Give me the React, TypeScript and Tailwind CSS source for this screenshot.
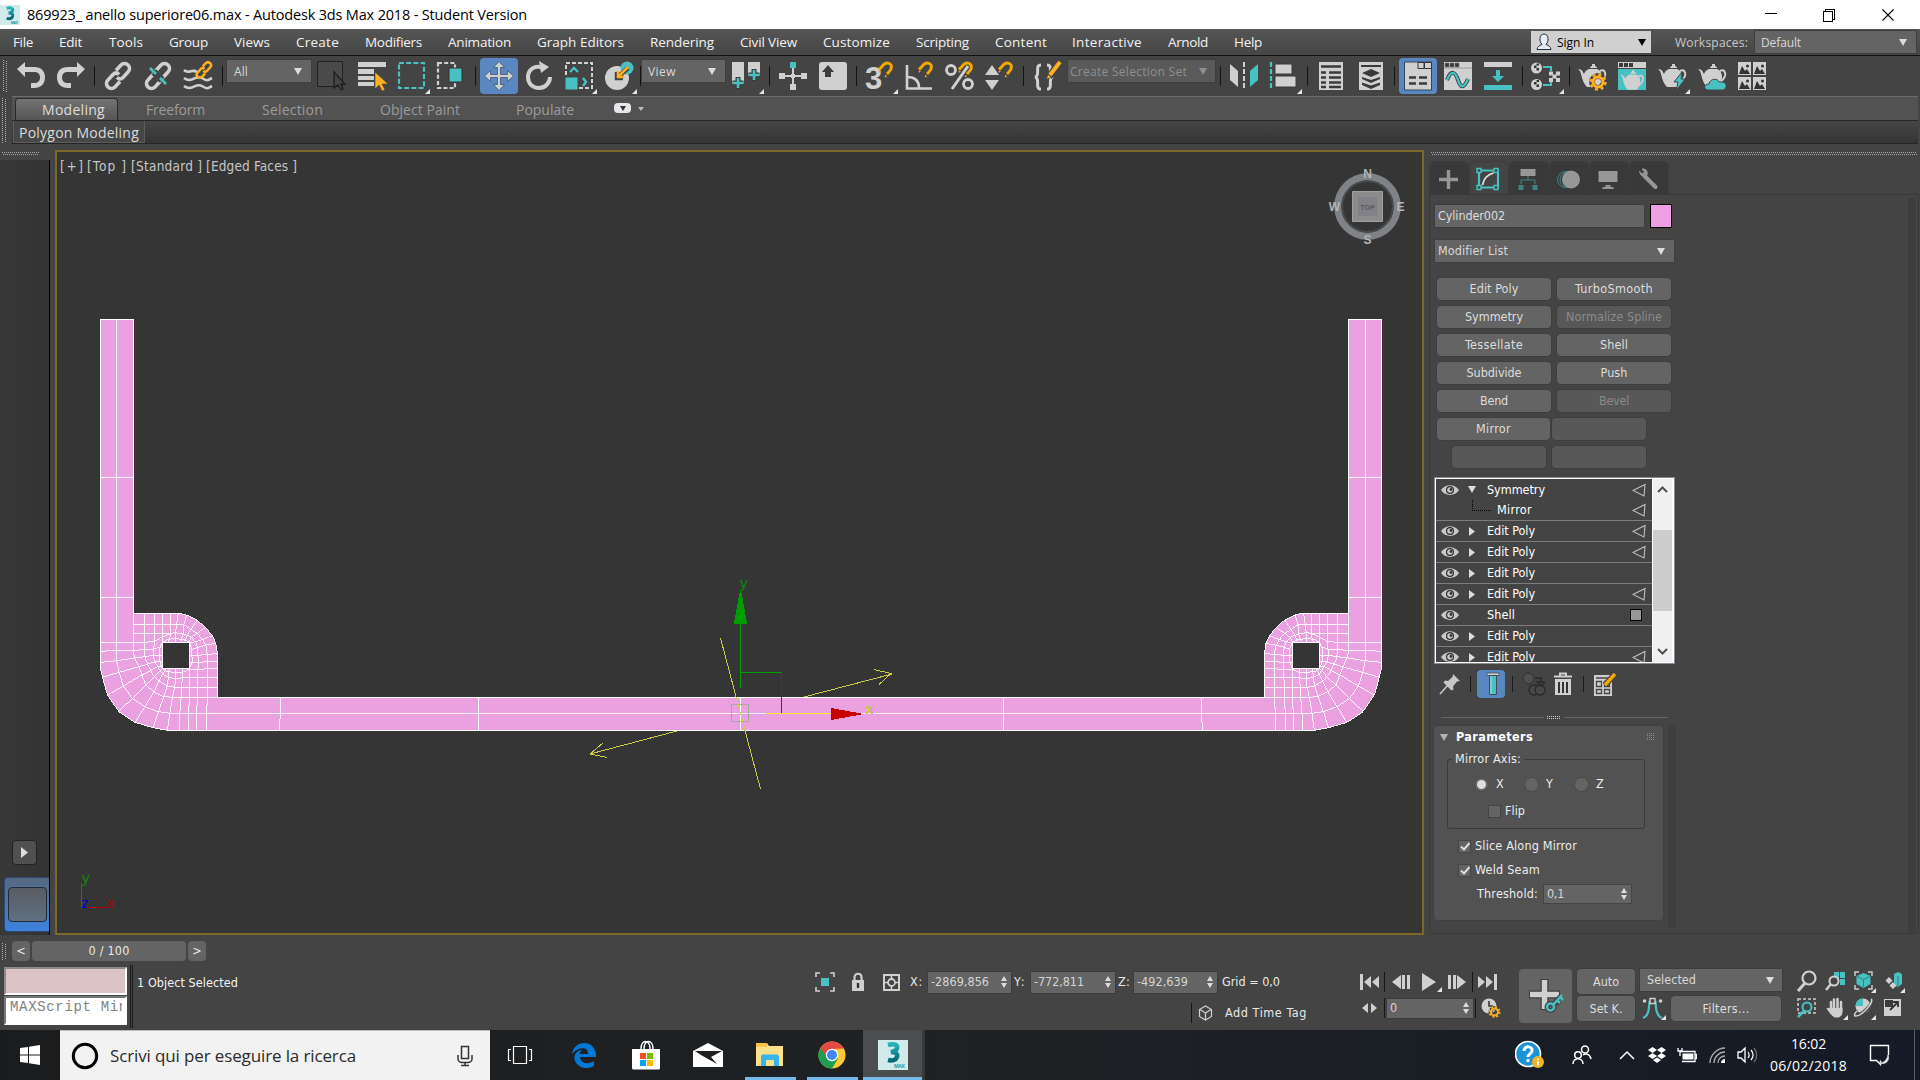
import React, { useLayoutEffect, useRef, useState } from 'react';

const L = '#d0d0d0';
const T = '#47c1c1';
const O = '#ffb01f';

/* Text tracked so that it fills the given advance width. */
function Txt({ w, className = '', children }: { w: number; className?: string; children: string }) {
  const ref = useRef<HTMLSpanElement>(null);
  const [sp, setSp] = useState(0);
  useLayoutEffect(() => {
    if (ref.current) setSp((w - ref.current.getBoundingClientRect().width) / children.length);
  }, [w, children]);
  return (
    <span ref={ref} className={`inline-block shrink-0 whitespace-pre ${className}`} style={{ letterSpacing: sp }}>
      {children}
    </span>
  );
}

type SvgP = { children: React.ReactNode; w?: number; h?: number; className?: string; vb?: string };
function Ico({ children, w = 32, h = 32, className = '', vb }: SvgP) {
  return (
    <svg width={w} height={h} viewBox={vb ?? `0 0 ${w} ${h}`} fill="none" className={`block shrink-0 ${className}`}>
      {children}
    </svg>
  );
}

function Tool({ children, active, fly }: { children: React.ReactNode; active?: boolean; fly?: boolean }) {
  return (
    <div className="flex h-10 w-10 shrink-0 items-center justify-center">
      <div className={active ? 'flex h-9 w-[38px] items-center justify-center rounded bg-[#5b87c1]' : 'flex h-9 w-[38px] items-center justify-center'}>
        <Ico w={38} h={36} vb="-3 -2 38 36" className="overflow-visible">
          {children}
          {fly && <path d="M34 29v5h-5z" fill="#e6e6e6" />}
        </Ico>
      </div>
    </div>
  );
}

const Sep = ({ className = 'w-[7px]' }: { className?: string }) => (
  <div className={`flex h-10 shrink-0 items-center justify-center ${className}`}>
    <div className="h-5 w-px bg-[#141414]" />
  </div>
);

const Down = ({ c = '#dcdcdc', w = 8 }: { c?: string; w?: number }) => (
  <Ico w={w} h={7} vb="0 0 8 7"><path d="M0 0h8L4 7z" fill={c} /></Ico>
);

function Combo({ label, tw, className, dim }: { label: string; tw: number; className: string; dim?: boolean }) {
  return (
    <div className={`flex shrink-0 items-center justify-between border border-[#3e3e3e] ${dim ? 'bg-[#5a5a5a] text-[#8f8f8f]' : 'bg-[#646464] text-[#d8d8d8]'} ${className}`}>
      <Txt w={tw} className="pt-px">{label}</Txt>
      <Down c={dim ? '#8f8f8f' : '#dcdcdc'} />
    </div>
  );
}

const Magnet = ({ x = 14, y = 2 }: { x?: number; y?: number }) => (
  <g transform={`translate(${x} ${y})`} stroke="#f5a800" fill="none">
    <path d="M1 7.500 4 4.500C7 0 11 0 13 3c1.500 3 0 5-3 8l-1 1" strokeWidth="3" />
    <path d="M1 9l2 2M7 14l3 1" strokeWidth="2" strokeDasharray="1.500 1.500" />
  </g>
);

const Teapot = ({ c = L, s = '' }: { c?: string; s?: string }) => (
  <g transform={s}>
    <path d="M2 9c4 0 5 3 6 5 1-3 3-4 5-5h8c3 1 5 4 5 8 0 4-2 7-4 10H11c-3-3-4-6-5-9C5 13 4 10 2 9zM14 8c0-1 1-2 2-2V4h3v2c1 0 2 1 2 2z" fill={c} />
    <path d="M24 11c4-2 6 1 5 5-1 3-3 5-6 7" stroke={c} strokeWidth="2" />
  </g>
);

const Chain = ({ cut }: { cut?: boolean }) => (
  <g stroke={L} strokeWidth="3.600">
    <path d="M14 10.500 19 5c2-2 5-2 7 0s2 5 0 7l-5 5.500c-2 2-4 2-6 0" />
    <path d="M18 21.500 13 27c-2 2-5 2-7 0s-2-5 0-7l5-5.500c2-2 4-2 6 0" />
    {cut && (
      <>
        <path d="M12 12l8 8" stroke="#444" strokeWidth="7" />
        <path d="M8 8l6 6M18 18l6 6" stroke={T} strokeWidth="2.800" />
      </>
    )}
  </g>
);

const menus: [string, number, string][] = [
  ['File', 20, 'w-[46px]'], ['Edit', 23, 'w-[50px]'], ['Tools', 34, 'w-[60px]'], ['Group', 39, 'w-[65px]'],
  ['Views', 36, 'w-[62px]'], ['Create', 43, 'w-[69px]'], ['Modifiers', 57, 'w-[83px]'], ['Animation', 63, 'w-[89px]'],
  ['Graph Editors', 87, 'w-[113px]'], ['Rendering', 64, 'w-[90px]'], ['Civil View', 57, 'w-[83px]'], ['Customize', 67, 'w-[93px]'],
  ['Scripting', 53, 'w-[79px]'], ['Content', 52, 'w-[77px]'], ['Interactive', 70, 'w-[96px]'], ['Arnold', 40, 'w-[66px]'], ['Help', 28, 'w-[40px]'],
];

const MaxLogo = ({ size }: { size: number }) => (
  <Ico w={size} h={size} vb="0 0 30 30">
    <defs>
      <linearGradient id="mx" x1="0" y1="0" x2="0" y2="1"><stop offset="0" stopColor="#22b5b5" /><stop offset="1" stopColor="#0a6670" /></linearGradient>
    </defs>
    <path d="M0 0h30v30H0z" fill="#d3eaec" />
    <path d="M10 5c6-2 10 0 9 3 0 3-4 3.500-6 4 5 0 7 2 6 5s-5 4-9 3" stroke="url(#mx)" strokeWidth="4.500" />
    <text x="16" y="28" fontSize="5.500" fontWeight="bold" fontFamily="Liberation Sans" fill="#12a0a8" textLength="11">MAX</text>
  </Ico>
);

function TitleBar() {
  return (
    <div className="flex h-[29px] items-center bg-white text-black">
      <MaxLogo size={20} />
      <div className="ml-[7px] flex-1 font-['Open_Sans'] text-[14.500px]"><Txt w={500}>869923_ anello superiore06.max - Autodesk 3ds Max 2018 - Student Version</Txt></div>
      <Ico w={130} h={16} className="mr-[26px]">
        <g stroke="#000" strokeWidth="1" shapeRendering="crispEdges">
          <path d="M1 6.500h12M59.500 4.500h9v10h-9zM61.500 4V2.500h9v10H69" />
        </g>
        <path d="M118.500 2.500l11 11M129.500 2.500l-11 11" stroke="#000" strokeWidth="1.100" />
      </Ico>
    </div>
  );
}

function MenuBar() {
  return (
    <div className="flex h-[27px] items-center border-b border-[#111] bg-gradient-to-b from-[#555] to-[#464646] pl-[13px] font-['Open_Sans'] text-[13.500px] text-[#f2f2f2]">
      {menus.map(([t, w, c]) => <div key={t} className={`shrink-0 ${c}`}><Txt w={w}>{t}</Txt></div>)}
      <div className="ml-auto flex h-[22px] w-[120px] items-center bg-[#d0d0d0] pl-1 text-[12px] text-black">
        <Ico w={18} h={18}>
          <path d="M2 16.500h14c0-3-3-4-5-5 2-2 2-4 2-6 0-6-8-6-8 0 0 2 0 4 2 6-2 1-5 2-5 5z" fill="#e9eef5" stroke="#1d2a3a" />
        </Ico>
        <span className="ml-1 pt-px"><Txt w={37}>Sign In</Txt></span>
        <span className="mr-1 ml-auto"><Down c="#000" w={10} /></span>
      </div>
      <div className="ml-6 w-[79px] pt-px text-[12px] text-[#c8c8c8]"><Txt w={73}>Workspaces:</Txt></div>
      <Combo label="Default" tw={40} className="mr-[3px] h-6 w-[163px] pr-[9px] pl-[6px] text-[12px]" />
    </div>
  );
}

const Grip = ({ className }: { className: string }) => (
  <Ico w={4} h={60} className={className}>
    <path d="M.500 0V60M3 1V60" stroke="#b0b0b0" strokeDasharray="1 1" shapeRendering="crispEdges" />
  </Ico>
);

function Toolbar() {
  return (
    <div className="flex h-10 items-center bg-[#444] pl-[2px] font-['Open_Sans'] text-[12px]">
      <div className="h-8 w-[9px] overflow-hidden"><Grip className="ml-px" /></div>
      <Tool><path d="M2 9 10 2v5h9c7 0 11 4 11 10 0 7-4 11-11 11h-3v-5h3c4 0 6-2 6-5.500S23 12 19 12h-9v5z" fill={L} /></Tool>
      <Tool><path d="M30 9 22 2v5h-9C6 7 2 11 2 17c0 7 4 11 11 11h3v-5h-3c-4 0-6-2-6-5.500S9 12 13 12h9v5z" fill={L} /></Tool>
      <Sep />
      <Tool><Chain /></Tool>
      <Tool><Chain cut /></Tool>
      <Tool>
        <path d="M2 10c5 5 8-2 13 2M2 18c8 6 12-4 18 0s6 2 10 0M2 26c8 6 12-4 18 0s6 2 10 0" stroke={L} strokeWidth="2.600" />
        <g transform="translate(12 0) scale(.62)"><path d="M14 10.500 19 5c2-2 5-2 7 0s2 5 0 7l-5 5.500c-2 2-4 2-6 0M18 21.500 13 27c-2 2-5 2-7 0s-2-5 0-7l5-5.500c2-2 4-2 6 0" stroke={O} strokeWidth="4" /></g>
      </Tool>
      <Sep className="w-2" />
      <Combo label="All" tw={14} className="mb-[10px] h-6 w-[86px] pr-[9px] pl-[7px]" />
      <Tool><path d="M1.500 1.500h25v25h-25z" fill="#4a4a4a" stroke="#222" /><path d="M18 12v16l4-3 3 5 2-1-2-5h4z" fill="#444" stroke="#1e1e1e" strokeWidth="1.300" /></Tool>
      <Tool>
        <path d="M2 2h28v5H2zM2 9h16v5H2zM2 16h16v4H2zM2 22h16v4H2z" fill={L} />
        <path d="M19 12v17l4-4 3 6 3-1-3-6h6z" fill={O} stroke="#444" strokeWidth=".600" />
      </Tool>
      <Tool fly><path d="M3 3h25v25H3z" stroke={T} strokeWidth="2.200" strokeDasharray="5 2.200" /></Tool>
      <Tool><path d="M2 3h17v25H2z" stroke={L} strokeWidth="2.200" strokeDasharray="4 2.200" /><path d="M13 8h13v14H13z" fill={T} stroke="#333" /></Tool>
      <Sep />
      <Tool active>
        <path d="M16 1.500l5.500 6h-4v7h7v-4l6 5.500-6 5.500v-4h-7v7h4l-5.500 6-5.500-6h4v-7h-7v4l-6-5.500 6-5.500v4h7v-7h-4z" fill={L} stroke="#3d5572" strokeWidth=".800" />
      </Tool>
      <Tool><path d="M20 8C12 4 5 10 5 17s5 11 11 11 11-5 11-11" stroke={L} strokeWidth="4" /><path d="M16 1l10 6-8 6z" fill={L} /></Tool>
      <Tool fly>
        <path d="M3 3h26v25H3z" stroke={L} strokeWidth="2" strokeDasharray="4 2" />
        <path d="M2 17h13v13H2z" fill={T} stroke="#444" />
        <path d="M7 12l4-4 4 4M20 18l3 4-3 4" stroke={T} strokeWidth="2.400" />
      </Tool>
      <Tool fly><circle cx="14" cy="18" r="12" fill={L} /><circle cx="24" cy="8" r="6.500" fill={T} /><path d="M25 8 14 18m0-6v6h6" stroke="#444" strokeWidth="4.500" /><path d="M25 7 15 17m0-6v6h6" stroke={O} strokeWidth="2.500" /></Tool>
      <Sep className="w-[2px]" />
      <Combo label="View" tw={28} className="mb-[10px] h-6 w-[85px] pr-[9px] pl-[6px]" />
      <Tool fly>
        <path d="M2 2h12v22H2zM18 2h12v14H18z" fill={L} />
        <path d="M8 17v12M2.500 23h11M24 9v12M18.500 15h11" stroke="#3a3a3a" strokeWidth="5" />
        <path d="M8 18v10M3 23h10M24 10v10M19 15h10" stroke={T} strokeWidth="2.600" />
      </Tool>
      <Sep />
      <Tool><path d="M16 6v22M4 16h24" stroke={L} strokeWidth="2" /><path d="M2 13h6v6H2zM24 13h6v6h-6zM13 24h6v6h-6zM14 14h4v4h-4z" fill={L} /><path d="M13 2h6v6h-6z" fill={T} /></Tool>
      <Tool><rect x="2" y="2" width="28" height="28" rx="3" fill={L} /><path d="M11 5l6 7h-3v5H8v-5H5z" fill="#3c3c3c" /></Tool>
      <Sep />
      <Tool fly><text x="1" y="29" fontSize="31" fontWeight="bold" fontFamily="Liberation Sans" fill={L}>3</text><Magnet /></Tool>
      <Tool><path d="M3 5v23.500h25M3 17c8 0 12 4 12 11" stroke={L} strokeWidth="2.600" /><Magnet /></Tool>
      <Tool><circle cx="7" cy="10" r="4.500" stroke={L} strokeWidth="2.800" /><circle cx="24" cy="24" r="4.500" stroke={L} strokeWidth="2.800" /><path d="M24 6 8 29" stroke={L} strokeWidth="3" /><Magnet /></Tool>
      <Tool><path d="M8 5l7 10H1zM8 30l7-10H1z" fill={L} /><Magnet /></Tool>
      <Sep />
      <Tool>
        <path d="M10 5c-7 0 0 11-6 12 6 1-1 12 6 12M16 5c7 0 0 11 6 12-6 1 1 12-6 12" stroke={L} strokeWidth="3" />
        <path d="M28 3 18 17" stroke="#444" strokeWidth="7" /><path d="M29 2 19 15" stroke={O} strokeWidth="4" /><path d="M16 19l1-4 3 2z" fill={O} />
      </Tool>
      <Combo label="Create Selection Set" tw={117} dim className="mb-[10px] h-6 w-[149px] pr-2 pl-[2px]" />
      <Sep className="w-2" />
      <Tool><path d="M2 4l8 7v16l-8-7z" fill={L} /><path d="M30 4l-8 7v16l8-7z" fill={T} /><path d="M16 2v28" stroke={L} strokeWidth="2" strokeDasharray="5 2" /></Tool>
      <Tool fly><path d="M3 2v28" stroke={T} strokeWidth="2.200" strokeDasharray="5 2" /><path d="M7 4h17v10H7zM7 16h21v11H7z" fill={L} stroke="#3a3a3a" /></Tool>
      <Sep />
      <Tool><path d="M4 2h24v28H4z" fill={L} /><path d="M6 6.500h20M6 12.500h5m3 0h12M6 17.500h5m3 0h12M6 22.500h5m3 0h12M6 27h5m3 0h12" stroke="#3a3a3a" strokeWidth="2.400" /></Tool>
      <Tool><path d="M4 2h24v28H4z" fill={L} /><path d="M6 6h20" stroke="#3a3a3a" strokeWidth="2" /><path d="M16 9l9 4-9 4-9-4zM7 17l9 3 9-3v2l-9 4-9-4zM7 22.500l9 3 9-3V25l-9 4-9-4z" fill="#3a3a3a" /></Tool>
      <Sep />
      <Tool active><path d="M2.500 2h27v28h-27z" fill={L} stroke="#33455c" /><path d="M16 2.500h6v6h-6zM22.500 2.500h7v6h-7z" fill={L} stroke="#333" /><path d="M7 17.500h7m3 0h8M7 23.500h7m3 0h8" stroke="#3a3a3a" strokeWidth="2.600" /></Tool>
      <Tool><path d="M2 2h28v28H2z" fill={L} /><path d="M3 3h4v4H3zM8 3h4v4H8zM13 3h4v4h-4zM2 8h28" fill="#3a3a3a" stroke="#777" strokeWidth=".600" /><path d="M5 20c4-10 8-9 11 0s6 8 10-1" stroke="#333" strokeWidth="4" /><path d="M5 20c4-10 8-9 11 0s6 8 10-1" stroke={T} strokeWidth="2.400" /></Tool>
      <Tool><path d="M2 2h28v5H2z" fill={L} /><path d="M2 25h28v5H2z" fill={T} /><path d="M14 10h4v6h4l-6 6-6-6h4z" fill={T} /></Tool>
      <Sep className="w-2" />
      <Tool fly>
        <circle cx="6.500" cy="8" r="5.500" fill={L} /><circle cx="6.500" cy="24.500" r="5.500" fill={L} />
        <path d="M4 5.500h2.500V8H4zM6.500 8H9v2.500H6.500zM6.500 3.500H9v2H6.500zM4 22h2.500v2.500H4zM6.500 24.500H9V27H6.500zM6.500 20H9v2H6.500z" fill="#333" />
        <path d="M13 7h8v4M13 25h8v-4" stroke={T} strokeWidth="2" />
        <path d="M19 11.500h4v4h-4zM26 11.500h4v4h-4zM22.500 14.500h4v4h-4zM19 18h4v4h-4zM26 18h4v4h-4z" fill={L} />
      </Tool>
      <Sep className="w-[6px]" />
      <Tool><Teapot /><circle cx="22" cy="22" r="6" stroke="#444" strokeWidth="6" /><circle cx="22" cy="22" r="5" stroke={O} strokeWidth="3" /><circle cx="22" cy="22" r="7.500" stroke={O} strokeWidth="2.400" strokeDasharray="3 2.900" /></Tool>
      <Tool><path d="M2 2h28v6H2z" fill={L} /><path d="M3 3h4v4H3zM8 3h4v4H8zM13 3h4v4h-4z" fill="#3a3a3a" /><path d="M2 9h28v21H2z" fill={T} /><Teapot s="translate(2.500 7) scale(.84)" /></Tool>
      <Tool fly><Teapot /><path d="M26 12l-8 10h4l-2 9 9-12h-4z" fill={T} stroke="#444" /></Tool>
      <Tool><Teapot /><path d="M12 30c-5-1-4-6 1-6 1-6 9-6 10-2 5-1 8 2 7 5s-3 3-5 3z" fill={T} stroke="#444" /></Tool>
      <Tool>
        {[[2, 2], [17, 2], [2, 17], [17, 17]].map(([x, y]) => (
          <g key={`${x}-${y}`} transform={`translate(${x} ${y})`}><path d="M0 0h13v13H0z" fill={L} /><path d="M1 12l3-8 3 5 2-2 3 5z" fill="#333" /><circle cx="9.500" cy="4" r="1.500" fill="#333" /></g>
        ))}
      </Tool>
    </div>
  );
}

function Ribbon() {
  return (
    <div className="flex bg-[#444] pr-[2px] pl-[2px] font-['Open_Sans'] text-[14px]">
      <div className="mt-[2px] h-[45px] w-[10px] overflow-hidden"><Grip className="" /></div>
      <div className="flex-1">
        <div className="flex h-[25px] items-end border-t border-b border-t-[#6b6b6b] border-b-[#262626] bg-[#525252] pl-[3px] text-[#9b9b9b]">
          <div className="flex h-[22px] w-[103px] items-center rounded-t-sm border border-b-0 border-[#2a2a2a] bg-gradient-to-b from-[#747474] to-[#555] pl-[26px] text-[#dcdcdc]"><Txt w={63}>Modeling</Txt></div>
          <div className="flex h-[22px] items-center">
            <div className="ml-[28px] w-[116px]"><Txt w={59}>Freeform</Txt></div>
            <div className="w-[118px]"><Txt w={61}>Selection</Txt></div>
            <div className="w-[136px]"><Txt w={80}>Object Paint</Txt></div>
            <div className="w-[98px]"><Txt w={58}>Populate</Txt></div>
            <div className="mb-[2px] flex h-[10px] w-[17px] items-center justify-center rounded-sm bg-[#e6e6ea]"><Ico w={6} h={5}><path d="M0 0h6L3 5z" fill="#333" /></Ico></div>
            <Ico w={6} h={4} className="ml-[7px]"><path d="M0 0h6L3 4z" fill="#bbb" /></Ico>
          </div>
        </div>
        <div className="flex h-[23px] border-b border-[#262626] bg-gradient-to-b from-[#464646] to-[#343434]">
          <div className="ml-px flex w-[132px] items-center border border-t-0 border-[#5c5c5c] bg-[#474747] pt-[2px] pl-[5px] text-[#dcdcdc]"><Txt w={120}>Polygon Modeling</Txt></div>
        </div>
      </div>
    </div>
  );
}

function LeftStrip() {
  return (
    <div className="flex w-[55px] shrink-0 flex-col">
      <Ico w={38} h={10} className="ml-[2px]"><path d="M0 2.500H37M1 4.500H37" stroke="#a8a8a8" strokeDasharray="1 1" shapeRendering="crispEdges" /></Ico>
      <div className="flex w-[50px] flex-1 flex-col justify-end border-r border-black bg-gradient-to-r from-[#383838] to-[#333]">
        <div className="ml-3 flex h-[25px] w-[25px] items-center justify-center rounded border border-[#222] bg-[#505050]"><Ico w={7} h={11}><path d="M0 0l7 5.500L0 11z" fill="#dedede" /></Ico></div>
        <div className="mt-3 mb-[3px] ml-[4px] h-[55px] rounded-l border border-r-0 border-[#2d4a73] bg-gradient-to-b from-[#566880] to-[#3b82e0] px-[3px] pt-[9px]">
          <div className="h-[35px] w-[39px] rounded-sm border border-[#222c38] bg-gradient-to-b from-[#585c62] to-[#606f82]" />
        </div>
      </div>
    </div>
  );
}

/* Corner mesh, drawn at three units per pixel. */
const mesh = [
  'M110-783V240L118 278 131 318 157 355 195 380 235 395 270 400H1983',
  'M62-307H160M62 52H160',
  'M160 100V212L165 235 178 262 198 315 222 335 252 350 280 352H412',
  'M160 133H310L332 148 352 160 368 178 380 200 382 222 383 352 380 400 379 451',
  'M193 100V205L196 235 205 255 218 282 238 303 262 318 285 322H412',
  'M160 160H270L287 158 315 163 335 172 350 192 354 206 355 245 353 352 350 400 349 451',
  'M223 100V190L221 227 224 243 235 262 250 284 266 292 287 296 312 293 412 292',
  'M240 205 247 188 262 178 287 176 314 179 328 187 336 205 337 248 328 267 312 276 287 277 262 275 247 265 240 245 238 222z',
  'M247 100V187M271 100V170L266 187M295 102 291 130 287 160V187',
  'M62 187H195L225 184 245 172 262 165 280 160',
  'M62 214 110 211 160 212 193 208 222 207 242 201',
  'M64 247 112 242 163 234 196 230 221 226H248',
  'M70 291 118 277 178 260 205 252 235 243 248 245',
  'M85 344 131 318 182 287 210 273 232 260 248 258',
  'M118 393 157 356 198 316 222 293 248 265',
  'M167 425 195 380 222 336 238 303 250 280 260 265',
  'M220 443 235 397 252 350 262 318 266 292 268 266',
  'M263 451 270 400 278 352 285 320 287 296V265',
  'M298 451 300 400 304 352 305 322 308 293V266',
  'M325 451 326 400 329 352 328 265',
  'M328 270 355 268 412 265M328 248 412 244M328 227 382 224 412 220',
  'M336 208 354 202 380 195 410 190M328 190 350 184 370 178 398 167',
  'M328 187 335 172 352 160 378 142M314 182 325 160 335 145 352 120M304 182 310 160 312 135 320 106',
  'M602 352V400L598 451M1197 352V451',
];
const outline = 'M1983 352H412V215L408 190 398 168 380 145 352 120 320 105 300 100H160V-783H62V265L68 292 83 345 118 396 165 427 220 443 263 451H1983';

const Half = () => (
  <g>
    <path d={`${outline}z M248 187V265H328V187z`} fill="#eba1df" fillRule="evenodd" />
    <path d={`${outline} M248 187V265H328V187z`} stroke="#fff" strokeWidth="3" />
    {mesh.map((d) => <path key={d} d={d} stroke="#fff" strokeWidth="2.700" />)}
  </g>
);

function Viewport() {
  return (
    <div className="h-[785px] w-[1369px] shrink-0 border-2 border-[#7c6828] bg-[#353535]">
      <svg width="1365" height="781" viewBox="57 152 1365 781" fill="none" className="block">
        <g shapeRendering="crispEdges">
          <g transform="translate(79.800 580) scale(.33333)"><Half /></g>
          <g transform="translate(1402 580) scale(-.33333 .33333)"><Half /></g>
          <path d="M740.500 697v33" stroke="#fff" />
        </g>
        <g transform="translate(560 560)" shapeRendering="crispEdges">
          <path d="M180.500 30l6 33h-12zM180.500 64v64M180.500 112.500h41" fill="#009c00" stroke="#009c00" />
          <path d="M221.500 113v40" stroke="#c80000" />
          <path d="M206 153.500h66" stroke="#f6e926" />
          <path d="M271 148l33 6-33 6z" fill="#c80000" />
          <path d="M171.500 144.500h17v17h-17z" stroke="#a8a8a8" />
          <path d="M160.500 78 200.500 229M244 137 332 114M314 109.500l17 4-12 11M117 171 30 194M47 197.500l-17-3.500 13-11" stroke="#cfca4a" />
        </g>
        <g fontFamily="Liberation Sans" fontSize="15">
          <text x="740" y="588" fill="#0a8a0a">y</text>
          <text x="865.500" y="714" fill="#777">x</text>
          <text x="865" y="713.500" fill="#e8dc20">x</text>
          <text x="82" y="883" fill="#0a8a0a">y</text>
          <text x="107" y="908" fill="#b00000">x</text>
          <text x="81.500" y="907.500" fill="#0000d0">z</text>
        </g>
        <g shapeRendering="crispEdges"><path d="M81.500 883v25" stroke="#0a8a0a" /><path d="M87 907.500h20" stroke="#b00000" /></g>
        <circle cx="1367.500" cy="206.500" r="29.800" stroke="#7f8287" strokeWidth="7" />
        <circle cx="1367.500" cy="206.500" r="25.200" stroke="#4a4d51" strokeWidth="1.500" />
        <path d="M1352.500 191.500h30v30h-30z" fill="#8c8c8c" stroke="#a0a0a0" />
        <path d="M1358 197h19v19h-19z" fill="#808287" />
        <g fontFamily="Liberation Sans" fontWeight="bold" textAnchor="middle">
          <text x="1367.500" y="209.500" fontSize="7" fill="#5a5c60">TOP</text>
          <g fontSize="12" fill="#b4b4b4">
            <text x="1367.500" y="178">N</text><text x="1367.500" y="244">S</text><text x="1334.500" y="211">W</text><text x="1400.500" y="211">E</text>
          </g>
        </g>
        <g fontFamily="DejaVu Sans Condensed, DejaVu Sans" fontSize="13.500" fill="#c6c6c6">
          <text x="60" y="171" textLength="23">[+]</text>
          <text x="87" y="171" textLength="39">[Top ]</text>
          <text x="131" y="171" textLength="71">[Standard ]</text>
          <text x="206" y="171" textLength="91">[Edged Faces ]</text>
        </g>
      </svg>
    </div>
  );
}

const G = '#979797';
const TD = '#3f8484';
const tabs = [
  <path key="a" d="M20 9v19M10.500 18.500h19" stroke={G} strokeWidth="3.400" />,
  <g key="b"><path d="M10.500 9.500h19v17h-19z" stroke={T} strokeWidth="2.200" /><path d="M8.500 7.500h4v4h-4zM25.500 7.500h4v4h-4zM8.500 24.500h4v4h-4zM25.500 24.500h4v4h-4z" fill="#444" stroke={T} strokeWidth="1.400" /><path d="M14 24c1-6 4-10 11-12" stroke="#e0e0e0" strokeWidth="1.800" /></g>,
  <g key="c"><path d="M12 8h15v7H12z" fill={G} /><path d="M19.500 15v4M12.500 23v-4h14v4" stroke={TD} /><path d="M10 24h5v5h-5zM24 24h5v5h-5z" fill={TD} /></g>,
  <g key="d"><circle cx="17" cy="18.500" r="8" stroke={TD} /><circle cx="19.500" cy="18.500" r="8" stroke={TD} /><circle cx="22.500" cy="18.500" r="9" fill={G} /></g>,
  <path key="e" d="M10 10h19v11H10zM17 24h5v2h3v2H14v-2h3z" fill={G} />,
  <g key="f"><path d="M16 15l11 11" stroke={G} strokeWidth="4" strokeLinecap="round" /><path d="M11 10.500l3 2.500 2-2-2.500-3c4-.500 6 2 5 6-1 2-6 3-7.500-3.500z" fill={G} stroke={G} /></g>,
];

function Btn({ t, w, dim, className = '' }: { t?: string; w?: number; dim?: boolean; className?: string }) {
  return (
    <div className={`flex h-6 shrink-0 items-center justify-center rounded-[5px] border border-[#3e3e3e] pt-px ${dim ? 'bg-[#585858] text-[#8b8b8b]' : 'bg-[#646464] text-[#dcdcdc]'} ${className}`}>
      {t && <Txt w={w ?? 40}>{t}</Txt>}
    </div>
  );
}

const Eye = () => (
  <Ico w={18} h={12} className="ml-[5px]"><path d="M0 6c4-6.500 14-6.500 18 0-4 6.500-14 6.500-18 0z" fill="#c8c8c8" /><circle cx="9" cy="6" r="4" fill="#2e2e2e" /><circle cx="9" cy="6" r="2.800" fill="#c8c8c8" /><circle cx="10" cy="5.500" r="1.400" fill="#333" /></Ico>
);
const Flag = () => <Ico w={14} h={14}><path d="M1 7.500 13 1.500 12 13z" stroke="#c0c0c0" strokeWidth="1.100" /></Ico>;

type Row = { t: string; w: number; arrow?: boolean; flag?: 'tri' | 'box' };
const rows: Row[] = [
  { t: 'Edit Poly', w: 48, arrow: true, flag: 'tri' },
  { t: 'Edit Poly', w: 48, arrow: true, flag: 'tri' },
  { t: 'Edit Poly', w: 48, arrow: true },
  { t: 'Edit Poly', w: 48, arrow: true, flag: 'tri' },
  { t: 'Shell', w: 28, flag: 'box' },
  { t: 'Edit Poly', w: 48, arrow: true },
  { t: 'Edit Poly', w: 48, arrow: true, flag: 'tri' },
];

function Stack() {
  return (
    <div className="ml-[4px] flex h-[187px] w-[241px] border border-[#8a8a94] bg-white p-px text-white">
      <div className="w-[216px] overflow-hidden bg-[#444]">
        <div className="flex h-[21px] items-center">
          <Eye />
          <div className="mx-[9px] w-[8px]"><Down /></div>
          <div className="ml-[2px] w-[145px] pt-px"><Txt w={58}>Symmetry</Txt></div>
          <Flag />
        </div>
        <div className="flex h-[21px] items-center border-b border-[#7d7d7d]">
          <Ico w={20} h={20} className="ml-[36px]"><path d="M.500 0v10.500H20" stroke="#000" strokeDasharray="1 1" shapeRendering="crispEdges" /></Ico>
          <div className="ml-[5px] w-[135px] pt-px"><Txt w={35}>Mirror</Txt></div>
          <Flag />
        </div>
        {rows.map((r, i) => (
          <div key={i} className="flex h-[21px] items-center border-b border-[#7d7d7d]">
            <Eye />
            <div className="mx-[10px] w-[8px]">{r.arrow && <Ico w={6} h={9}><path d="M0 0l6 4.500L0 9z" fill="#dcdcdc" /></Ico>}</div>
            <div className="w-[145px] pt-px"><Txt w={r.w}>{r.t}</Txt></div>
            {r.flag === 'tri' && <Flag />}
            {r.flag === 'box' && <div className="-ml-[2px] h-3 w-3 border border-black bg-[#979797]" />}
          </div>
        ))}
      </div>
      <div className="ml-px flex w-[19px] flex-col items-center bg-[#f0f0f0]">
        <Ico w={11} h={7} className="mt-[7px]"><path d="M1 6l4.500-4.500L10 6" stroke="#505050" strokeWidth="2" /></Ico>
        <div className="mt-[37px] h-[81px] w-[19px] bg-[#cdcdcd]" />
        <Ico w={11} h={7} className="mt-[37px]"><path d="M1 1l4.500 4.500L10 1" stroke="#505050" strokeWidth="2" /></Ico>
      </div>
    </div>
  );
}

const Tick = ({ on }: { on?: boolean }) => (
  <div className="flex h-[13px] w-[13px] shrink-0 items-center justify-center border border-[#454545] bg-[#646464]">
    {on && <Ico w={10} h={9}><path d="M1 4.500l3 3L9.500 1" stroke="#dedede" strokeWidth="2" /></Ico>}
  </div>
);
const Spin = () => <Ico w={6} h={12}><path d="M3 0l3 5H0zM3 12l3-5H0z" fill="#dcdcdc" /></Ico>;

function CommandPanel() {
  return (
    <div className="flex w-[496px] shrink-0 flex-col pt-[2px] pl-[5px] font-['DejaVu_Sans_Condensed','DejaVu_Sans'] text-[12.500px] text-[#dcdcdc]">
      <Ico w={486} h={4} className="ml-[2px]"><path d="M0 .500H486M1 2.500H486" stroke="#a8a8a8" strokeDasharray="1 1" shapeRendering="crispEdges" /></Ico>
      <div className="mt-[5px] flex h-[33px]">
        {tabs.map((t, i) => (
          <div key={i} className={`w-10 overflow-hidden rounded-t-md border-x border-t border-[#3b3b3b] ${i === 1 ? 'bg-[#444]' : 'bg-[#393939]'}`}><Ico w={38} h={33} vb="1.500 1 38 33">{t}</Ico></div>
        ))}
      </div>
      <div className="flex h-[740px] w-[490px] rounded-b border border-[#393939]">
        <div className="w-[246px]">
          <div className="mt-[9px] ml-[4px] flex items-center">
            <div className="flex h-6 w-[211px] items-center border border-[#3e3e3e] bg-[#646464] pl-[3px]"><Txt w={67}>Cylinder002</Txt></div>
            <div className="ml-[5px] h-6 w-[22px] border border-black bg-[#f09fe4]" />
          </div>
          <Combo label="Modifier List" tw={70} className="mt-[11px] ml-[4px] h-6 w-[241px] pr-[9px] pl-[3px]" />
          <div className="mt-[14px] ml-[6px] grid w-[236px] grid-cols-[116px_116px] gap-x-1 gap-y-1">
            <Btn t="Edit Poly" w={49} /><Btn t="TurboSmooth" w={78} />
            <Btn t="Symmetry" w={58} /><Btn t="Normalize Spline" w={96} dim />
            <Btn t="Tessellate" w={58} /><Btn t="Shell" w={28} />
            <Btn t="Subdivide" w={55} /><Btn t="Push" w={27} />
            <Btn t="Bend" w={28} /><Btn t="Bevel" w={30} dim />
          </div>
          <div className="mt-1 ml-[6px] flex"><Btn t="Mirror" w={35} className="w-[115px]" /><Btn dim className="w-24" /></div>
          <div className="mt-1 mb-2 ml-[21px] flex gap-1"><Btn dim className="w-24" /><Btn dim className="w-24" /></div>
          <Stack />
          <div className="mt-[6px] ml-[9px] flex h-7 items-center">
            <Ico w={22} h={22}><path d="M1 21l8-9" stroke="#c8c8c8" strokeWidth="1.600" /><path d="M14 1l7 7-3 .500-4 5 .500 3-2 1-8-8 1.500-2 3 .500 4.500-4z" fill="#c8c8c8" /></Ico>
            <div className="ml-[9px] h-4 w-px bg-[#1a1a1a]" />
            <div className="ml-[6px] flex h-7 w-7 items-center justify-center rounded bg-[#5b87c1]"><Ico w={14} h={24} className="ml-[3px]"><path d="M1 1h12v2.500H1z" fill={L} stroke="#333" strokeWidth=".600" /><path d="M3.500 3.500v19h7v-19z" fill={T} stroke="#3d4a58" /><path d="M5 4v18" stroke={L} /></Ico></div>
            <div className="ml-[7px] h-4 w-px bg-[#1a1a1a]" />
            <Ico w={24} h={24} className="ml-[9px]"><circle cx="6.500" cy="6.500" r="5.500" fill="#4f4f4f" stroke="#2d2d2d" /><circle cx="12" cy="18" r="5" fill="#484848" stroke="#2a2a2a" strokeWidth="1.300" /><circle cx="18" cy="18" r="5" fill="#484848" stroke="#2a2a2a" strokeWidth="1.300" /><path d="M13 6h6v5m-4-1 4 4 4-4z" stroke="#2a2a2a" strokeWidth="1.500" /></Ico>
            <Ico w={18} h={24} className="ml-[8px]"><path d="M6 4V1.500h6V4M0 4.500h18" stroke={L} strokeWidth="2" /><path d="M1 7h16v16H1z" fill={L} /><path d="M5 10v11M9 10v11M13 10v11" stroke="#333" strokeWidth="2" /></Ico>
            <div className="ml-[11px] h-4 w-px bg-[#1a1a1a]" />
            <Ico w={24} h={25} className="ml-[9px]"><path d="M1 3h18v21H1z" fill={L} /><path d="M3 6h13M3.500 9.500h5v5h-5zM11.500 9.500h5v5h-5zM3.500 17.500h5v4h-5zM11.500 17.500h5v4h-5z" stroke="#444" strokeWidth="1.300" /><path d="M22 2 12 13" stroke="#444" strokeWidth="6" /><path d="M22 2 12 13" stroke="#f5a800" strokeWidth="3.400" /></Ico>
          </div>
          <Ico w={227} h={6} className="mt-4 ml-[11px]"><path d="M0 3.500h103M123 3.500h104" stroke="#666" /><path d="M106 2.500h13M106 4.500h13" stroke="#ccc" strokeDasharray="1 1" shapeRendering="crispEdges" /></Ico>
          <div className="mt-[5px] flex">
            <div className="ml-[3px] h-[196px] w-[231px] rounded border border-[#3f3f3f] bg-[#525252] text-[#ececec]">
              <div className="mt-[3px] flex h-4 items-center pl-[6px]">
                <Down c="#b4b4b4" />
                <span className="ml-2 pt-px font-bold text-white"><Txt w={77}>Parameters</Txt></span>
                <Ico w={8} h={8} className="mr-[8px] ml-auto"><path d="M0 .500h8M0 2.500h8M0 4.500h8M0 6.500h8" stroke="#8e8e8e" strokeDasharray="1 1" shapeRendering="crispEdges" /></Ico>
              </div>
              <fieldset className="mt-[6px] ml-[13px] h-[78px] w-[198px] rounded-[3px] border border-[#3a3a3a]">
                <legend className="ml-[4px] h-4 px-[3px] leading-4"><Txt w={66}>Mirror Axis:</Txt></legend>
                <div className="mt-[8px] ml-[26px] flex h-[19px] items-center">
                  {['X', 'Y', 'Z'].map((a) => (
                    <div key={a} className="flex w-[50px] items-center">
                      <div className="flex h-[15px] w-[15px] items-center justify-center rounded-full border border-[#4a4a4a] bg-[#646464]">{a === 'X' && <div className="h-[9px] w-[9px] rounded-full bg-[#dedede]" />}</div>
                      <span className="ml-[7px]">{a}</span>
                    </div>
                  ))}
                </div>
                <div className="mt-[8px] ml-[40px] flex h-[18px] items-center gap-[4px]"><Tick /><Txt w={20}>Flip</Txt></div>
              </fieldset>
              <div className="mt-[8px] ml-[24px] flex h-[18px] items-center gap-[4px]"><Tick on /><Txt w={102} className="pt-px">Slice Along Mirror</Txt></div>
              <div className="mt-[6px] ml-[24px] flex h-[18px] items-center gap-[4px]"><Tick on /><Txt w={65} className="pt-px">Weld Seam</Txt></div>
              <div className="mt-[5px] ml-[43px] flex items-center">
                <Txt w={61}>Threshold:</Txt>
                <div className="ml-[5px] flex h-5 w-[89px] items-center justify-between border border-[#454545] bg-[#646464] pr-[4px] pl-[3px] text-[#d4d4d4]"><Txt w={17}>0,1</Txt><Spin /></div>
              </div>
            </div>
            <div className="ml-[4px] h-[203px] w-2 rounded-t bg-[#3e3e3e]" />
          </div>
        </div>
        <div className="mt-[3px] mr-[2px] ml-auto w-2 rounded-t bg-[#3d3d3d]" />
      </div>
    </div>
  );
}

const Field = ({ v, w, className }: { v: string; w: number; className: string }) => (
  <div className={`flex shrink-0 items-center justify-between border border-[#3c3c3c] bg-[#646464] pr-[4px] pl-[3px] text-[#d4d4d4] ${className}`}><Txt w={w} className="pt-px">{v}</Txt><Spin /></div>
);
const Bar = ({ className = '' }: { className?: string }) => <div className={`h-5 w-px shrink-0 bg-[#161616] ${className}`} />;
const NavFly = () => <path d="M25 20v5h-5z" fill="#e6e6e6" />;

function Status() {
  return (
    <div className="flex h-[95px] flex-col bg-[#444] font-['DejaVu_Sans_Condensed','DejaVu_Sans'] text-[12.500px] text-[#e8e8e8]">
      <div className="flex h-[30px] items-center pt-[2px]">
        <div className="ml-[2px] h-[17px] w-[10px] overflow-hidden"><Grip className="" /></div>
        <div className="flex h-5 w-[18px] items-center justify-center rounded bg-[#646464]">&lt;</div>
        <div className="mx-[2px] flex h-5 w-[154px] items-center justify-center rounded bg-[#646464] pt-px"><Txt w={41}>0 / 100</Txt></div>
        <div className="flex h-5 w-[18px] items-center justify-center rounded bg-[#646464]">&gt;</div>
      </div>
      <div className="flex h-[65px]">
        <div className="mt-[2px] ml-[4px] w-[123px]">
          <div className="h-[28px] border-2 border-t-[#8b8b8b] border-r-white border-b-white border-l-[#8b8b8b] bg-[#dbc3c3]" />
          <div className="mt-px flex h-[29px] overflow-hidden border-2 border-t-[#777] border-r-white border-b-white border-l-[#777] bg-white pr-[3px] pl-[4px]">
            <div className="overflow-hidden font-['Liberation_Mono'] text-[14px] leading-[19px] whitespace-nowrap text-[#808080]"><Txt w={136}>MAXScript Mini </Txt></div>
          </div>
        </div>
        <div className="mt-0 ml-[3px] h-[63px] w-[3px] border-x border-[#1a1a1a]" />
        <div className="mt-[9px] ml-[4px] w-[678px]"><Txt w={101} className="text-[#f4f4f4]">1 Object Selected</Txt></div>
        <div className="w-[545px]">
          <div className="flex h-[34px] items-center">
            <Ico w={20} h={20}><path d="M1 5V1h4M15 1h4v4M19 15v4h-4M5 19H1v-4" stroke={L} strokeWidth="1.600" /><path d="M6 6h8v8H6z" fill={T} /></Ico>
            <Ico w={12} h={20} className="ml-[17px]"><path d="M2.500 9V5.500c0-5 7-5 7 0V9" stroke={L} strokeWidth="2.200" /><path d="M0 8h12v11H0z" fill={L} /><path d="M6 11v5" stroke="#333" strokeWidth="2.400" /></Ico>
            <Ico w={17} h={17} className="ml-[19px]"><path d="M1 1h15v15H1z" stroke={L} strokeWidth="2" /><circle cx="8.500" cy="8.500" r="3.500" stroke={L} strokeWidth="1.800" /><path d="M8.500 2v3M8.500 12v3M2 8.500h3M12 8.500h3" stroke={L} strokeWidth="1.600" /></Ico>
            <div className="ml-[10px] w-[17px] pt-px"><Txt w={13}>X:</Txt></div><Field v="-2869,856" w={58} className="h-[23px] w-[85px]" />
            <div className="ml-[2px] w-[16px] pt-px"><Txt w={12}>Y:</Txt></div><Field v="-772,811" w={50} className="h-[23px] w-[86px]" />
            <div className="ml-[2px] w-[15px] pt-px"><Txt w={12}>Z:</Txt></div><Field v="-492,639" w={51} className="h-[23px] w-[85px]" />
            <div className="ml-[4px]"><Txt w={58}>Grid = 0,0</Txt></div>
          </div>
          <div className="ml-[376px] flex h-[28px] items-center">
            <Bar />
            <Ico w={15} h={16} className="ml-[6px]"><path d="M7.500 1l6 3.500v7l-6 3.500-6-3.500v-7zM7.500 15V8L2 4.500M7.500 8 13 4.500" stroke={L} strokeWidth="1.200" /></Ico>
            <div className="ml-[12px] pt-px"><Txt w={82}>Add Time Tag</Txt></div>
          </div>
        </div>
        <div className="w-[159px]">
          <div className="flex h-[34px] items-center">
            <Ico w={19} h={16}><path d="M1.500 0v16" stroke={L} strokeWidth="3" /><path d="M11 2v12L4 8zM19 2v12l-7-6z" fill={L} /></Ico>
            <Bar className="ml-[5px]" />
            <Ico w={18} h={16} className="ml-[7px]"><path d="M9 1v14L0 8zM10 1h3v14h-3zM15 1h3v14h-3z" fill={L} /></Ico>
            <Ico w={21} h={20} className="ml-[12px]"><path d="M0 1l14 9-14 9z" fill={L} /><path d="M20 15v5h-5z" fill="#e6e6e6" /></Ico>
            <Ico w={18} h={16} className="ml-[5px]"><path d="M9 1v14l9-7zM0 1h3v14H0zM5 1h3v14H5z" fill={L} /></Ico>
            <Bar className="ml-[6px]" />
            <Ico w={19} h={16} className="ml-[5px]"><path d="M17.500 0v16" stroke={L} strokeWidth="3" /><path d="M0 2v12l7-6zM8 2v12l7-6z" fill={L} /></Ico>
          </div>
          <div className="flex h-[18px] items-center">
            <Ico w={15} h={12} className="ml-[2px]"><path d="M6 1v10L0 6zM9 1v10l6-5z" fill={L} /></Ico>
            <Bar className="ml-[7px]" />
            <Field v="0" w={7} className="ml-px h-[21px] w-[88px]" />
            <Bar className="ml-px" />
            <Ico w={20} h={20} className="ml-[5px]"><circle cx="8" cy="8" r="7.500" fill={L} /><path d="M8 3v5h4" stroke="#333" strokeWidth="1.600" /><circle cx="13.500" cy="14" r="4" stroke="#444" strokeWidth="4" /><circle cx="13.500" cy="14" r="3.500" stroke={O} strokeWidth="2" /><circle cx="13.500" cy="14" r="5.200" stroke={O} strokeWidth="1.600" strokeDasharray="2 2.080" /></Ico>
          </div>
        </div>
        <div className="mt-[4px] flex h-[54px] w-[53px] items-center justify-center rounded bg-[#646464]">
          <Ico w={36} h={36}><path d="M16.500 1v31M1 16.500h31" stroke="#3e3e3e" strokeWidth="8" /><path d="M16.500 2v29M2 16.500h29" stroke={L} strokeWidth="5.500" /><circle cx="22.500" cy="29" r="3.500" stroke="#444" strokeWidth="5" /><path d="M25 27l8-9M29 23l3 3" stroke="#444" strokeWidth="5" /><circle cx="22.500" cy="29" r="3.500" stroke={T} strokeWidth="2.500" /><path d="M25 27l9-10M29 22l3 3M32 19l3 3" stroke={T} strokeWidth="2.500" /></Ico>
        </div>
        <div className="mt-[3px] ml-[4px] w-[60px]"><Btn t="Auto" w={26} className="!h-[27px]" /><Btn t="Set K." w={33} className="!h-[27px]" /></div>
        <div className="mt-[3px] ml-[3px] w-[144px]">
          <Combo label="Selected" tw={49} className="h-6 w-[144px] pr-[8px] pl-[7px]" />
          <div className="mt-[3px] flex items-center">
            <Ico w={25} h={25} className="ml-[3px]"><path d="M1 22c6-2 6-10 6.500-17M20 22c-6-2-6-10-6.500-17" stroke={T} strokeWidth="2.200" /><circle cx="2.500" cy="5" r="1.800" fill={L} /><circle cx="18.500" cy="5" r="1.800" fill={L} /><path d="M8 2.500h5v5H8z" fill="#444" stroke={L} strokeWidth="1.400" /><path d="M24 19v5h-5z" fill="#e6e6e6" /></Ico>
            <Btn t="Filters..." w={47} className="ml-[3px] !h-[27px] w-[112px]" />
          </div>
        </div>
        <div className="mt-[3px] ml-[11px] grid h-[54px] grid-cols-4 grid-rows-2 gap-x-[2.500px]">
          <Ico w={26} h={26}><circle cx="15" cy="10" r="6.500" stroke={L} strokeWidth="2.200" /><path d="M11 15l-7 8" stroke={L} strokeWidth="3" /></Ico>
          <Ico w={26} h={26}><path d="M11 4h5v6h-5zM17 4h5v6h-5zM17 11h5v6h-5z" fill={T} /><circle cx="11" cy="13" r="4.500" fill="#444" stroke={L} strokeWidth="2" /><path d="M8 16l-5 6" stroke={L} strokeWidth="2.500" /></Ico>
          <Ico w={26} h={26}><path d="M4 8V4h4M17 4h4v4M21 17v4h-4M8 21H4v-4" stroke={L} strokeWidth="1.400" /><path d="M12.500 5l7 3v8l-7 4-7-4V8z" fill={T} /><path d="M6 8.500l6.500 3 6.500-3M12.500 11.500V19" stroke="#2f7f80" /><NavFly /></Ico>
          <Ico w={26} h={26}><path d="M14 6l4-2 4 2v10l-4 3-4-3z" fill={T} /><path d="M18 8v10" stroke="#2f7f80" /><path d="M9 9l3.500 3.500L9 16l-3.500-3.500zM13 14l3.500 3.500L13 21l-3.500-3.500z" fill={L} /><NavFly /></Ico>
          <Ico w={26} h={26}><path d="M4 4h17v14H4z" stroke={L} strokeWidth="1.500" strokeDasharray="3 2" /><circle cx="13" cy="12" r="4.500" stroke={T} strokeWidth="2" fill="#444" /><path d="M10 16l-6 6" stroke={T} strokeWidth="2.500" /></Ico>
          <Ico w={26} h={26}><path d="M8 16V7M11 15V4.500M14.500 15V4M18 16V7" stroke={L} strokeWidth="2.500" strokeLinecap="round" /><path d="M7 13h12.500v4c0 3-2 5-4 5.500h-4C8 20 5 16 3.500 13.500 5 12 7 13 8 15z" fill={L} /><NavFly /></Ico>
          <Ico w={26} h={26}><circle cx="12" cy="11" r="7.500" fill={L} /><path d="M12 11V3.500A7.500 7.500 0 0 0 4.500 11z" fill={T} /><path d="M21 5c3 3-11 17-17 16" stroke="#444" strokeWidth="4" /><path d="M20 4c4 3-10 18-16 17-1-1 0-3 2-5" stroke={L} strokeWidth="1.600" /><NavFly /></Ico>
          <Ico w={26} h={26}><path d="M4 4h17v17H4z" fill={L} /><path d="M5 5h8v7H5z" fill="#3c3c3c" /><path d="M10 15l8-8m-5 0h5v5" stroke="#333" strokeWidth="1.800" /></Ico>
        </div>
      </div>
    </div>
  );
}

function TaskIcon({ children, open, active }: { children: React.ReactNode; open?: boolean; active?: boolean }) {
  return (
    <div className={`flex h-[50px] w-[62px] shrink-0 flex-col items-center ${active ? 'border-r-[3px] border-[#38393b] bg-[#4b4d4f]' : ''}`}>
      <div className="flex h-[47px] items-center justify-center pt-[3px]">{children}</div>
      {open && <div className={`h-[3px] bg-[#76b9ed] ${active ? 'w-full' : 'w-[51px]'}`} />}
    </div>
  );
}

function Taskbar() {
  return (
    <div className="flex h-[50px] items-center bg-gradient-to-r from-[#1b1c1e] via-[#1f2224] to-[#141a26] text-white">
      <div className="flex w-[60px] justify-center"><Ico w={20} h={20}><path d="M0 3l8-1v7.500H0zM9 1.800 20 0v9.500H9zM0 10.500h8V18l-8-1zM9 10.500h11V20L9 18.200z" fill="#fff" /></Ico></div>
      <div className="flex h-[50px] w-[430px] items-center border-t border-[#bbb] bg-[#f2f2f2] pl-[11px] font-['Open_Sans'] text-[17px] text-[#2b2b2b]">
        <Ico w={28} h={28}><circle cx="14" cy="14" r="11.700" stroke="#000" strokeWidth="3" /></Ico>
        <div className="ml-[11px]"><Txt w={246}>Scrivi qui per eseguire la ricerca</Txt></div>
        <Ico w={16} h={22} className="mr-[17px] ml-auto"><path d="M4.500 1.500h7v12h-7zM1 10v4c0 2 2 3.500 4 3.500h6c2 0 4-1.500 4-3.500v-4M8 17.500V21M4 20.500h8" stroke="#333" strokeWidth="1.500" /></Ico>
      </div>
      <div className="-ml-px flex">
        <TaskIcon><Ico w={26} h={20}><path d="M6.500 1.500h13v17h-13zM4 4.500H1.500v11H4M22 4.500h2.500v11H22" stroke="#fff" strokeWidth="1.200" /></Ico></TaskIcon>
        <div className="ml-[2px] flex">
          <TaskIcon><Ico w={26} h={26}><path d="M1 12C3-3 26-3 25 15H9c1 8 10 7 14 4v5C12 30 2 22 3.500 14 5 10 8 8 11 7.500c-2 2-2 3-2.300 4.500H17c0-8-10-7-16 0z" fill="#0078d7" /></Ico></TaskIcon>
          <TaskIcon><Ico w={30} h={30}><path d="M1 9h28v19a1.500 1.500 0 0 1-1.500 1.500h-25A1.500 1.500 0 0 1 1 28z" fill="#fff" /><path d="M10 9c0-10 9-10 9 0M13 9c0-10 9-10 9 0" stroke="#fff" strokeWidth="1.500" /><path d="M9 13h6v6H9z" fill="#f25022" /><path d="M16 13h6v6h-6z" fill="#7fba00" /><path d="M9 20h6v6H9z" fill="#00a4ef" /><path d="M16 20h6v6h-6z" fill="#ffb900" /></Ico></TaskIcon>
          <TaskIcon><Ico w={30} h={26}><path d="M0 9 15 1l15 8v16H0z" fill="#fff" /><path d="M2 9h27L18 15l6 7L8 13z" fill="#1c1e20" /></Ico></TaskIcon>
          <TaskIcon open><Ico w={28} h={26}><path d="M0 1h11l2 3h14v20H0z" fill="#ffe08a" /><path d="M0 1h11v4H0z" fill="#f7c245" /><path d="M5 24V15c0-2 1-2.500 2-2.500h13c1 0 3 .500 3 2.500v9h-5v-6H10v6z" fill="#35b5e9" /></Ico></TaskIcon>
          <TaskIcon open>
            <Ico w={28} h={28}><circle cx="14" cy="14" r="13.500" fill="#fcc934" /><path d="M14 14 2.300 7.200A13.500 13.500 0 0 0 14 27.500l6-10z" fill="#1e9e50" /><path d="M2.300 7.200A13.500 13.500 0 0 1 25.700 7.500L14 8 9 16z" fill="#e04a3f" /><circle cx="14" cy="14" r="6.200" fill="#fff" /><circle cx="14" cy="14" r="5" fill="#4285f4" /></Ico>
          </TaskIcon>
          <TaskIcon open active><MaxLogo size={30} /></TaskIcon>
        </div>
      </div>
      <div className="mr-[5px] ml-auto flex h-[50px] items-center">
        <Ico w={30} h={30}><circle cx="13" cy="14" r="12.500" fill="#1c93d6" stroke="#fff" strokeWidth="1.600" /><path d="M9 11c0-6 9-5 8 0-1 3-4 3-4 6M13 19v3" stroke="#fff" strokeWidth="3" /><circle cx="23" cy="22" r="6" fill="#f5b120" /><path d="M23 18.500v1.500M23 21v4.500" stroke="#fff" strokeWidth="1.800" /></Ico>
        <Ico w={20} h={20} className="ml-[27px]"><g stroke="#fff" strokeWidth="1.500"><circle cx="13" cy="4.500" r="3.500" /><circle cx="6" cy="10" r="3.300" /><path d="M1 19c0-7 10-7 10 0M11 10c3-2 7-1 8 4" /></g></Ico>
        <Ico w={16} h={10} className="ml-[27px]"><path d="M1 9l7-7 7 7" stroke="#fff" strokeWidth="1.500" /></Ico>
        <Ico w={18} h={16} className="ml-[13px]"><path d="M4.500 0 9 3 4.500 6 0 3zM13.500 0 18 3l-4.500 3L9 3zM4.500 6 9 9l-4.500 3L0 9zM13.500 6 18 9l-4.500 3L9 9zM9 10.500l4 2.500-4 3-4-3z" fill="#fff" /></Ico>
        <Ico w={20} h={16} className="ml-[11px]"><path d="M3 4.500h15v10H5M18 7.500h1.500v4H18" stroke="#fff" strokeWidth="1.300" /><path d="M5.500 6.500h11v6h-11z" fill="#fff" /><path d="M1 1v3h4V1M3 4v5" stroke="#fff" strokeWidth="1.300" /></Ico>
        <Ico w={17} h={16} className="ml-[12px]"><g stroke="#aaa" strokeWidth="1.300"><path d="M1 16C1 8 8 1 16 1" /><path d="M5 16c0-6 5-11 11-11" /><path d="M9 16c0-4 3-7 7-7" /></g><path d="M12 16c0-3 2-4 4-4v4z" fill="#fff" /></Ico>
        <Ico w={22} h={18} className="ml-[11px]"><path d="M1 6h3l4-4v14l-4-4H1z" stroke="#fff" strokeWidth="1.300" /><path d="M11 6c1.500 2 1.500 4 0 6M14 4c2.500 3 2.500 7 0 10" stroke="#fff" strokeWidth="1.200" /><path d="M17 2c3.500 4 3.500 10 0 14" stroke="#777" strokeWidth="1.200" /></Ico>
        <div className="ml-[11px] flex w-[77px] flex-col items-center gap-[2px] font-['Open_Sans'] text-[14px] leading-5"><Txt w={35}>16:02</Txt><Txt w={77}>06/02/2018</Txt></div>
        <Ico w={22} h={22} className="ml-[22px]"><path d="M19.500 11V1.500h-18v15h6l4 4v-4" stroke="#fff" strokeWidth="1.400" /><path d="M19 11c2 5-2 10-8 8 4 0 7-3 8-8z" fill="#fff" stroke="#ccc" /></Ico>
        <div className="ml-[23px] h-[50px] w-px bg-[#5a5e66]" />
      </div>
    </div>
  );
}

export default function App() {
  return (
    <div className="flex h-[1080px] w-[1920px] flex-col overflow-hidden bg-[#444]">
      <TitleBar />
      <MenuBar />
      <Toolbar />
      <Ribbon />
      <div className="mt-[6px] flex h-[785px]">
        <LeftStrip />
        <Viewport />
        <CommandPanel />
      </div>
      <Status />
      <Taskbar />
    </div>
  );
}
